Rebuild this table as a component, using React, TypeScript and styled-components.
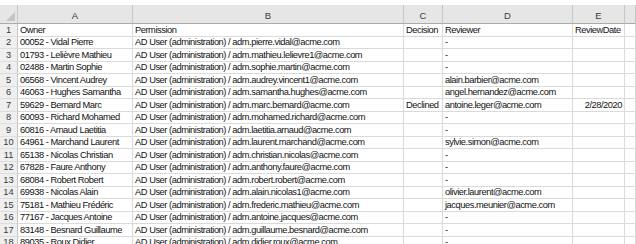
import styled, { createGlobalStyle } from 'styled-components';

const GlobalStyle = createGlobalStyle`
  * {
    margin: 0;
    padding: 0;
    box-sizing: border-box;
  }

  body {
    font-family: 'Liberation Sans', Arial, sans-serif;
    background: #ffffff;
    overflow: hidden;
  }
`;

const columns = ['A', 'B', 'C', 'D', 'E', ''];

type Row = [string, string, string, string, string];

const rows: Row[] = [
  ['Owner', 'Permission', 'Decision', 'Reviewer', 'ReviewDate'],
  ['00052 - Vidal Pierre', 'AD User (administration) / adm.pierre.vidal@acme.com', '', '-', ''],
  ['01793 - Lelièvre Mathieu', 'AD User (administration) / adm.mathieu.lelievre1@acme.com', '', '-', ''],
  ['02488 - Martin Sophie', 'AD User (administration) / adm.sophie.martin@acme.com', '', '-', ''],
  ['06568 - Vincent Audrey', 'AD User (administration) / adm.audrey.vincent1@acme.com', '', 'alain.barbier@acme.com', ''],
  ['46063 - Hughes Samantha', 'AD User (administration) / adm.samantha.hughes@acme.com', '', 'angel.hernandez@acme.com', ''],
  ['59629 - Bernard Marc', 'AD User (administration) / adm.marc.bernard@acme.com', 'Declined', 'antoine.leger@acme.com', '2/28/2020'],
  ['60093 - Richard Mohamed', 'AD User (administration) / adm.mohamed.richard@acme.com', '', '-', ''],
  ['60816 - Arnaud Laetitia', 'AD User (administration) / adm.laetitia.arnaud@acme.com', '', '-', ''],
  ['64961 - Marchand Laurent', 'AD User (administration) / adm.laurent.marchand@acme.com', '', 'sylvie.simon@acme.com', ''],
  ['65138 - Nicolas Christian', 'AD User (administration) / adm.christian.nicolas@acme.com', '', '-', ''],
  ['67828 - Faure Anthony', 'AD User (administration) / adm.anthony.faure@acme.com', '', '-', ''],
  ['68084 - Robert Robert', 'AD User (administration) / adm.robert.robert@acme.com', '', '-', ''],
  ['69938 - Nicolas Alain', 'AD User (administration) / adm.alain.nicolas1@acme.com', '', 'olivier.laurent@acme.com', ''],
  ['75181 - Mathieu Frédéric', 'AD User (administration) / adm.frederic.mathieu@acme.com', '', 'jacques.meunier@acme.com', ''],
  ['77167 - Jacques Antoine', 'AD User (administration) / adm.antoine.jacques@acme.com', '', '-', ''],
  ['83148 - Besnard Guillaume', 'AD User (administration) / adm.guillaume.besnard@acme.com', '', '-', ''],
  ['89035 - Roux Didier', 'AD User (administration) / adm.didier.roux@acme.com', '', '-', ''],
];

const Sheet = styled.div`
  padding-top: 5px;
  width: 636px;
  height: 244px;
  overflow: hidden;
`;

const Grid = styled.div`
  display: grid;
  grid-template-columns: 18px 115px 271px 39px 130px 52px 1fr;
  grid-auto-rows: 12.5px;
  grid-template-rows: 19px;
`;

const Corner = styled.div`
  position: relative;
  background: #e6e6e6;
  border-right: 1px solid #c6c6c6;
  border-bottom: 1px solid #ababab;

  &::after {
    content: '';
    position: absolute;
    right: 2px;
    bottom: 2px;
    border-style: solid;
    border-width: 0 0 9px 9px;
    border-color: transparent transparent #c4c4c4 transparent;
  }
`;

const ColHeader = styled.div`
  background: #e6e6e6;
  border-right: 1px solid #c6c6c6;
  border-bottom: 1px solid #ababab;
  color: #3a3a3a;
  font-size: 9.5px;
  display: flex;
  align-items: center;
  justify-content: center;
  padding-top: 2px;
`;

const RowHeader = styled.div`
  background: #efefef;
  border-right: 1px solid #c6c6c6;
  border-bottom: 1px solid #dedede;
  color: #3a3a3a;
  font-size: 9.3px;
  display: flex;
  align-items: flex-end;
  justify-content: center;
  line-height: 11px;
`;

const Cell = styled.div<{ $right?: boolean }>`
  border-right: 1px solid #dadada;
  border-bottom: 1px solid #dadada;
  color: #111;
  font-size: 9.3px;
  letter-spacing: -0.45px;
  line-height: 11px;
  white-space: nowrap;
  overflow: visible;
  display: flex;
  align-items: flex-end;
  justify-content: ${(p) => (p.$right ? 'flex-end' : 'flex-start')};
  padding: 0 2px;
  position: relative;
  z-index: 1;
`;

function App() {
  return (
    <>
      <GlobalStyle />
      <Sheet>
        <Grid>
          <Corner />
          {columns.map((c, i) => (
            <ColHeader key={i}>{c}</ColHeader>
          ))}
          {rows.map((r, i) => [
            <RowHeader key={`h${i}`}>{i + 1}</RowHeader>,
            ...r.map((v, j) => (
              <Cell key={`${i}-${j}`} $right={j === 4 && i > 0}>
                {v}
              </Cell>
            )),
            <Cell key={`${i}-x`} />,
          ])}
        </Grid>
      </Sheet>
    </>
  );
}

export default App;
